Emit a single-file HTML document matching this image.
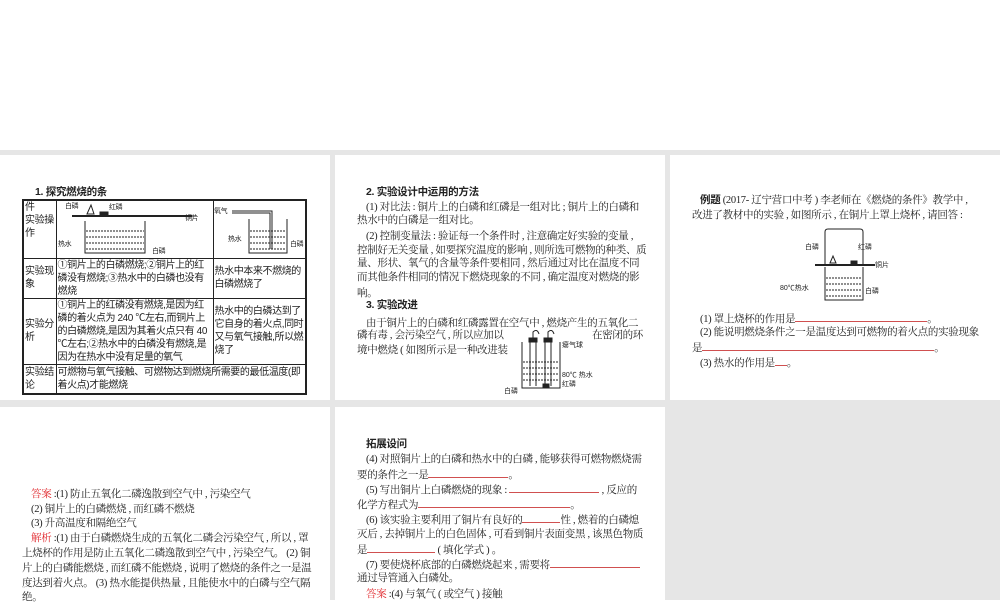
<!DOCTYPE html>
<html><head><meta charset="utf-8"><style>
body{margin:0;width:1000px;height:600px;background:#fff;position:relative;overflow:hidden;font-family:"Liberation Serif","Noto Serif CJK SC","Noto Sans CJK SC",serif;color:#222;}
.bg{position:absolute;left:0;top:150px;width:1000px;height:450px;background:#e6e6e6;}
.p{position:absolute;background:#fff;}
.t{position:absolute;font-size:10.5px;white-space:nowrap;line-height:15px;letter-spacing:-0.3px;}
.b{font-weight:bold;font-family:"Liberation Sans","Noto Sans CJK SC",sans-serif;}
.r{color:#e0262b;}
.u{display:inline-block;border-bottom:1px solid #d05050;height:10px;vertical-align:baseline;}
table{position:absolute;border-collapse:collapse;table-layout:fixed;font-size:10px;line-height:13px;letter-spacing:-0.4px;font-family:"Liberation Sans","Noto Sans CJK SC",sans-serif;}
td{border:1px solid #222;padding:0 1px;vertical-align:middle;overflow:hidden;}
</style></head><body>
<div class="bg"></div>
<div class="p" style="left:0;top:155px;width:330px;height:245px"></div>
<div class="p" style="left:335px;top:155px;width:330px;height:245px"></div>
<div class="p" style="left:670px;top:155px;width:330px;height:245px"></div>
<div class="p" style="left:0;top:407px;width:330px;height:193px"></div>
<div class="p" style="left:335px;top:407px;width:330px;height:193px"></div>

<div class="t b" style="left:35px;top:185px">1. 探究燃烧的条</div>
<table style="left:22px;top:199px;width:283px;border:2px solid #222">
<colgroup><col style="width:33px"><col style="width:157px"><col style="width:93px"></colgroup>
<tr style="height:58px"><td style="vertical-align:top">件<br>实验操<br>作</td><td style="padding:0">
<svg width="155" height="56" style="display:block"><g stroke="#222" fill="none" font-size="7" font-family="Liberation Sans,Noto Sans CJK SC"><line x1="15" y1="15" x2="135" y2="15" stroke-width="2"/><path d="M28 20 V52 H88 V20"/><path d="M29 30 H87 M29 36 H87 M29 42 H87 M29 48 H87" stroke-dasharray="2 1"/><path d="M30 13 L34 4 L37 13Z" fill="#fff"/><rect x="43" y="11" width="8" height="4" fill="#222"/><line x1="140" y1="15" x2="120" y2="15"/><text x="8" y="7" fill="#222" stroke="none">白磷</text><text x="52" y="8" fill="#222" stroke="none">红磷</text><text x="128" y="19" fill="#222" stroke="none">铜片</text><text x="1" y="45" fill="#222" stroke="none">热水</text><text x="95" y="52" fill="#222" stroke="none">白磷</text></g></svg></td>
<td style="padding:0"><svg width="92" height="56" style="display:block"><g stroke="#222" fill="none" font-size="7" font-family="Liberation Sans,Noto Sans CJK SC"><path d="M35 18 V52 H73 V18"/><path d="M36 30 H72 M36 36 H72 M36 42 H72 M36 48 H72" stroke-dasharray="2 1"/><path d="M18 10 H58 V48 M18 12 H56 V48"/><text x="0" y="12" fill="#222" stroke="none">氧气</text><text x="14" y="40" fill="#222" stroke="none">热水</text><text x="76" y="45" fill="#222" stroke="none">白磷</text></g></svg></td></tr>
<tr style="height:39px"><td>实验现<br>象</td><td>①铜片上的白磷燃烧;②铜片上的红磷没有燃烧;③热水中的白磷也没有燃烧</td><td>热水中本来不燃烧的白磷燃烧了</td></tr>
<tr style="height:64px"><td>实验分<br>析</td><td>①铜片上的红磷没有燃烧,是因为红磷的着火点为 240 ℃左右,而铜片上的白磷燃烧,是因为其着火点只有 40 ℃左右;②热水中的白磷没有燃烧,是因为在热水中没有足量的氧气</td><td>热水中的白磷达到了它自身的着火点,同时又与氧气接触,所以燃烧了</td></tr>
<tr style="height:30px"><td>实验结<br>论</td><td colspan="2">可燃物与氧气接触、可燃物达到燃烧所需要的最低温度(即着火点)才能燃烧</td></tr>
</table>

<div class="t b" style="left:366px;top:185px">2. 实验设计中运用的方法</div>
<div class="t" style="left:366px;top:200px">(1) 对比法 : 铜片上的白磷和红磷是一组对比 ; 铜片上的白磷和</div>
<div class="t" style="left:357px;top:213px">热水中的白磷是一组对比。</div>
<div class="t" style="left:366px;top:229px">(2) 控制变量法 : 验证每一个条件时 , 注意确定好实验的变量 ,</div>
<div class="t" style="left:357px;top:243px">控制好无关变量 , 如要探究温度的影响 , 则所选可燃物的种类、质</div>
<div class="t" style="left:357px;top:256px">量、形状、氧气的含量等条件要相同 , 然后通过对比在温度不同</div>
<div class="t" style="left:357px;top:270px">而其他条件相同的情况下燃烧现象的不同 , 确定温度对燃烧的影</div>
<div class="t" style="left:357px;top:286px">响。</div>
<div class="t b" style="left:366px;top:298px">3. 实验改进</div>
<div class="t" style="left:366px;top:316px">由于铜片上的白磷和红磷露置在空气中 , 燃烧产生的五氧化二</div>
<div class="t" style="left:357px;top:328px">磷有毒 , 会污染空气 , 所以应加以</div>
<div class="t" style="left:592px;top:328px">在密闭的环</div>
<div class="t" style="left:357px;top:343px">境中燃烧 ( 如图所示是一种改进装</div>
<svg style="position:absolute;left:500px;top:330px" width="120" height="70"><g stroke="#222" fill="none" font-size="7" font-family="Liberation Sans,Noto Sans CJK SC"><path d="M22 12 V58 H60 V12"/><path d="M30 8 V56 M36 8 V56 M45 8 V56 M51 8 V56"/><path d="M23 32 H59 M23 38 H59 M23 44 H59 M23 50 H59" stroke-dasharray="2 1"/><rect x="29" y="8" width="8" height="4" fill="#222"/><rect x="44" y="8" width="8" height="4" fill="#222"/><path d="M33 8 V2 Q37 -2 39 4 M48 8 V2 Q52 -2 54 4"/><rect x="43" y="54" width="6" height="3" fill="#222"/><text x="62" y="17" fill="#222" stroke="none">瘪气球</text><text x="62" y="47" fill="#222" stroke="none">80℃ 热水</text><text x="62" y="56" fill="#222" stroke="none">红磷</text><text x="4" y="63" fill="#222" stroke="none">白磷</text></g></svg>

<div class="t" style="left:700px;top:193px"><span class="b">例题</span> (2017- 辽宁营口中考 ) 李老师在《燃烧的条件》教学中 ,</div>
<div class="t" style="left:692px;top:208px">改进了教材中的实验 , 如图所示 , 在铜片上罩上烧杯 , 请回答 :</div>
<svg style="position:absolute;left:775px;top:228px" width="120" height="75"><g stroke="#222" fill="none" font-size="7" font-family="Liberation Sans,Noto Sans CJK SC"><path d="M50 36 V4 Q50 1 53 1 H85 Q88 1 88 4 V36"/><line x1="40" y1="37" x2="100" y2="37" stroke-width="2"/><path d="M50 39 V72 H88 V39"/><path d="M51 50 H87 M51 56 H87 M51 62 H87 M51 68 H87" stroke-dasharray="2 1"/><path d="M55 35 L58 28 L61 35Z"/><rect x="76" y="33" width="6" height="3" fill="#222"/><text x="30" y="21" fill="#222" stroke="none">白磷</text><text x="83" y="21" fill="#222" stroke="none">红磷</text><text x="100" y="39" fill="#222" stroke="none">铜片</text><text x="5" y="62" fill="#222" stroke="none">80℃热水</text><text x="90" y="65" fill="#222" stroke="none">白磷</text></g></svg>
<div class="t" style="left:700px;top:311px">(1) 罩上烧杯的作用是<span class="u" style="width:132px"></span>。</div>
<div class="t" style="left:700px;top:325px">(2) 能说明燃烧条件之一是温度达到可燃物的着火点的实验现象</div>
<div class="t" style="left:692px;top:340px">是<span class="u" style="width:232px"></span>。</div>
<div class="t" style="left:700px;top:355px">(3) 热水的作用是<span class="u" style="width:12px"></span>。</div>

<div class="t" style="left:31px;top:487px"><span class="r">答案</span> :(1) 防止五氧化二磷逸散到空气中 , 污染空气</div>
<div class="t" style="left:31px;top:502px">(2) 铜片上的白磷燃烧 , 而红磷不燃烧</div>
<div class="t" style="left:31px;top:516px">(3) 升高温度和隔绝空气</div>
<div class="t" style="left:31px;top:531px"><span class="r">解析</span> :(1) 由于白磷燃烧生成的五氧化二磷会污染空气 , 所以 , 罩</div>
<div class="t" style="left:22px;top:546px">上烧杯的作用是防止五氧化二磷逸散到空气中 , 污染空气。 (2) 铜</div>
<div class="t" style="left:22px;top:561px">片上的白磷能燃烧 , 而红磷不能燃烧 , 说明了燃烧的条件之一是温</div>
<div class="t" style="left:22px;top:576px">度达到着火点。 (3) 热水能提供热量 , 且能使水中的白磷与空气隔</div>
<div class="t" style="left:22px;top:590px">绝。</div>

<div class="t b" style="left:366px;top:437px">拓展设问</div>
<div class="t" style="left:366px;top:452px">(4) 对照铜片上的白磷和热水中的白磷 , 能够获得可燃物燃烧需</div>
<div class="t" style="left:357px;top:467px">要的条件之一是<span class="u" style="width:80px"></span>。</div>
<div class="t" style="left:366px;top:482px">(5) 写出铜片上白磷燃烧的现象 : <span class="u" style="width:90px"></span> , 反应的</div>
<div class="t" style="left:357px;top:497px">化学方程式为<span class="u" style="width:152px"></span>。</div>
<div class="t" style="left:366px;top:512px">(6) 该实验主要利用了铜片有良好的<span class="u" style="width:38px"></span>性 , 燃着的白磷熄</div>
<div class="t" style="left:357px;top:527px">灭后 , 去掉铜片上的白色固体 , 可看到铜片表面变黑 , 该黑色物质</div>
<div class="t" style="left:357px;top:542px">是<span class="u" style="width:68px"></span> ( 填化学式 ) 。</div>
<div class="t" style="left:366px;top:557px">(7) 要使烧杯底部的白磷燃烧起来 , 需要将<span class="u" style="width:90px"></span></div>
<div class="t" style="left:357px;top:571px">通过导管通入白磷处。</div>
<div class="t" style="left:366px;top:587px"><span class="r">答案</span> :(4) 与氧气 ( 或空气 ) 接触</div>
</body></html>
